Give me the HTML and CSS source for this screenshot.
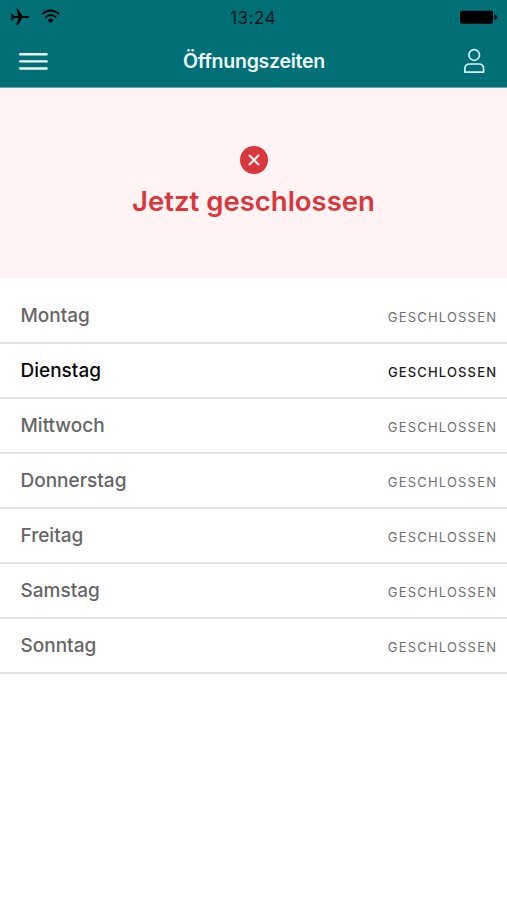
FILE: index.html
```html
<!DOCTYPE html>
<html lang="de">
<head>
<meta charset="utf-8">
<title>Öffnungszeiten</title>
<link rel="stylesheet" href="styles.css">
</head>
<body>
<header class="header">
  <div class="statusbar">
    <div class="signals">
      <svg width="20" height="18" viewBox="0 0 20 18"><path d="M19.300 9c0-.8-.9-1.100-1.900-1.100h-4.900L7.700 .8H6.300L8.400 7.900H4L2.200 5.500H.8L1.600 9 .8 12.500h1.400L4 10.100h4.400L6.300 17.200h1.400l4.800-7.100h4.900c1 0 1.900-.3 1.900-1.100z"/></svg>
      <svg width="20" height="18" viewBox="0 0 20 18"><g fill="none" stroke="#000" stroke-width="1.800"><path d="M1.200 6.100Q9.700 -1.200 18.200 6.100"/><path d="M4.300 9.400Q9.700 4.700 15.100 9.400"/></g><path d="M9.700 15.300L6.800 12.200Q9.700 9.500 12.600 12.200z"/></svg>
    </div>
    <div class="time">13:24</div>
    <div class="power"><svg width="39" height="16" viewBox="0 0 39 16"><rect x="1" y="1.800" width="33" height="13" rx="2"/><path d="M35.500 5.500q2.700 .4 2.700 2.800t-2.700 2.800z"/></svg></div>
  </div>
  <nav class="navbar">
    <svg class="menu" width="30" height="20" viewBox="0 0 30 20"><path d="M2.200 3.300h26.400M2.200 10.400h26.400M2.200 17.500h26.400" stroke="#effafa" stroke-width="2.400" stroke-linecap="round"/></svg>
    <h1 class="title">Öffnungszeiten</h1>
    <svg class="user" width="24" height="26" viewBox="0 0 24 26" fill="none" stroke="#d5f3f3" stroke-width="1.700"><circle cx="12.200" cy="7" r="5.300"/><path d="M2.800 24.100v-3.200q0-4.900 4.900-4.900h9q4.900 0 4.900 4.900v3.200z" stroke-linejoin="round"/></svg>
  </nav>
</header>
<section class="state">
  <svg width="28" height="28" viewBox="0 0 28 28"><circle cx="14" cy="14" r="14" fill="#d9363e"/><path d="M9.500 9.500l9 9m0-9l-9 9" stroke="#fff3f3" stroke-width="2" stroke-linecap="round"/></svg>
  <div class="state-text">Jetzt geschlossen</div>
</section>
<ul class="days">
  <li class="day"><span class="name">Montag</span><span class="hours">GESCHLOSSEN</span></li>
  <li class="day today"><span class="name">Dienstag</span><span class="hours">GESCHLOSSEN</span></li>
  <li class="day"><span class="name">Mittwoch</span><span class="hours">GESCHLOSSEN</span></li>
  <li class="day"><span class="name">Donnerstag</span><span class="hours">GESCHLOSSEN</span></li>
  <li class="day"><span class="name">Freitag</span><span class="hours">GESCHLOSSEN</span></li>
  <li class="day"><span class="name">Samstag</span><span class="hours">GESCHLOSSEN</span></li>
  <li class="day"><span class="name">Sonntag</span><span class="hours">GESCHLOSSEN</span></li>
</ul>
</body>
</html>
```
FILE: styles.css
```css
* { box-sizing: border-box; }
body {
  margin: 0;
  min-height: 900px;
  background: #fff;
  font-family: Inter, "Liberation Sans", sans-serif;
}
svg { display: block; flex: none; }
.header { height: 88px; background: #007076; border-bottom: 1px solid #66a5a8; }
.statusbar {
  display: grid;
  grid-template-columns: 1fr auto 1fr;
  align-items: center;
  height: 34px;
  padding: 0 9px 0 10px;
}
.signals { display: flex; gap: 11px; }
.time { margin: 0 2px -1px 0; padding-top: 1px; font-size: 17.500px; line-height: 34px; letter-spacing: .3px; color: #031d1f; }
.power { display: flex; justify-content: flex-end; }
.navbar {
  display: grid;
  grid-template-columns: 1fr auto 1fr;
  align-items: center;
  height: 53px;
  padding: 0 21px 0 18px;
}
.title { margin: 0; padding-left: 4px; font-size: 19.500px; line-height: 54px; font-weight: 600; letter-spacing: -.250px; color: #effafa; }
.user { justify-self: end; }
.state {
  display: flex;
  flex-direction: column;
  align-items: center;
  height: 190px;
  padding-top: 58px;
  background: #fff4f3;
}
.state-text {
  margin-top: 9px;
  font-size: 27.500px;
  line-height: 36px;
  font-weight: 600;
  color: #d9363e;
}
.days { margin: 0; padding: 11px 0 0; list-style: none; }
.day {
  display: flex;
  justify-content: space-between;
  align-items: baseline;
  height: 55px;
  padding: 0 11px 0 20.500px;
  border-bottom: 2px solid #e3e3e3;
  color: #666;
  line-height: 54px;
}
.name { font-size: 19px; font-weight: 500; }
.hours { font-size: 13px; letter-spacing: 1.200px; margin-right: -1.200px; color: #707070; }
.today .name { color: #0a0a0a; }
.today .hours { font-weight: 500; letter-spacing: 1.150px; margin-right: -1.150px; color: #1c1c1c; }
```
